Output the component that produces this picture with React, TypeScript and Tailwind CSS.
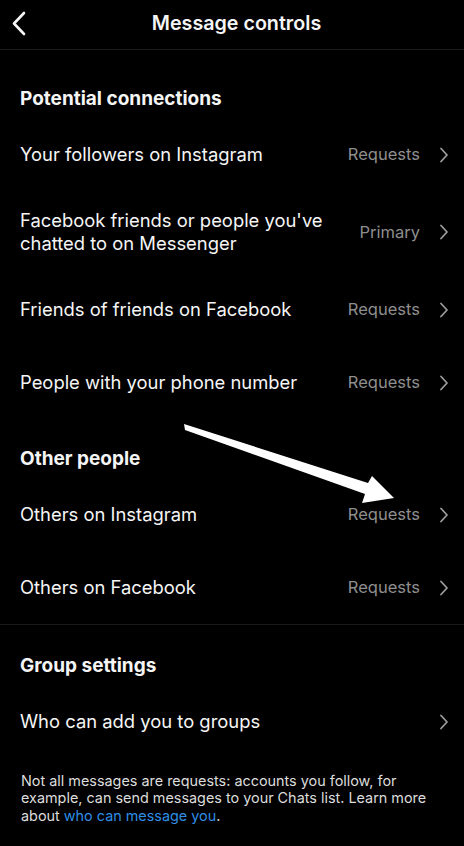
import React from "react";

const Chevron = () => (
  <svg width="10" height="16" viewBox="0 0 10 16" fill="none" className="shrink-0">
    <path d="M2 1.5 L8 8 L2 14.5" stroke="#9b9b9b" strokeWidth="1.8" strokeLinecap="round" strokeLinejoin="round" />
  </svg>
);

type RowProps = { label: React.ReactNode; value?: string; tall?: boolean };

const Row = ({ label, value, tall }: RowProps) => (
  <div className={`flex items-center pl-[20px] pr-[15px] ${tall ? "h-[82px]" : "h-[73px]"}`}>
    <div className="flex-1 text-[18.4px] leading-[23px] text-[#f5f5f5]">{label}</div>
    {value && <div className="text-[16.5px] text-[#8e8e8e] mr-[19px]">{value}</div>}
    <Chevron />
  </div>
);

const Header = ({ children, pt }: { children: React.ReactNode; pt: string }) => (
  <div className={`px-[20px] ${pt} pb-[8px] text-[19px] leading-[22px] font-bold text-[#f5f5f5]`}>
    {children}
  </div>
);

export default function App() {
  return (
    <div
      className="w-[464px] h-[846px] bg-black overflow-hidden relative"
      style={{ fontFamily: "Inter, 'Noto Sans', sans-serif" }}
    >
      <div className="h-[50px] flex items-center justify-center relative border-b border-[#1a1a1a]">
        <svg width="16" height="26" viewBox="0 0 16 26" fill="none" className="absolute left-[11px] top-[11px]">
          <path d="M13 2 L3 12.5 L13 23" stroke="#f5f5f5" strokeWidth="2.6" strokeLinecap="round" strokeLinejoin="round" />
        </svg>
        <div className="text-[19.7px] font-semibold text-[#f5f5f5] -mt-[2px] ml-[9px]">Message controls</div>
      </div>

      <Header pt="pt-[38px]">Potential connections</Header>
      <Row label="Your followers on Instagram" value="Requests" />
      <Row
        tall
        label={
          <>
            Facebook friends or people you've
            <br />
            chatted to on Messenger
          </>
        }
        value="Primary"
      />
      <Row label="Friends of friends on Facebook" value="Requests" />
      <Row label="People with your phone number" value="Requests" />

      <Header pt="pt-[29px]">Other people</Header>
      <Row label="Others on Instagram" value="Requests" />
      <Row label="Others on Facebook" value="Requests" />

      <div className="border-t border-[#1a1a1a]" />

      <Header pt="pt-[30px]">Group settings</Header>
      <Row label="Who can add you to groups" />

      <p className="px-[21px] pt-[14px] text-[14.4px] leading-[17.3px] text-[#dcdcdc]">
        Not all messages are requests: accounts you follow, for example, can send messages to your Chats list. Learn more about{" "}
        <span className="text-[#2f8de4]">who can message you</span>.
      </p>

      <svg width="464" height="846" className="absolute left-0 top-0 pointer-events-none" viewBox="0 0 464 846">
        <polygon
          points="184,424 368,483 372,476 394,498 362,503 365,494 185,430"
          fill="#ffffff"
        />
      </svg>
    </div>
  );
}
